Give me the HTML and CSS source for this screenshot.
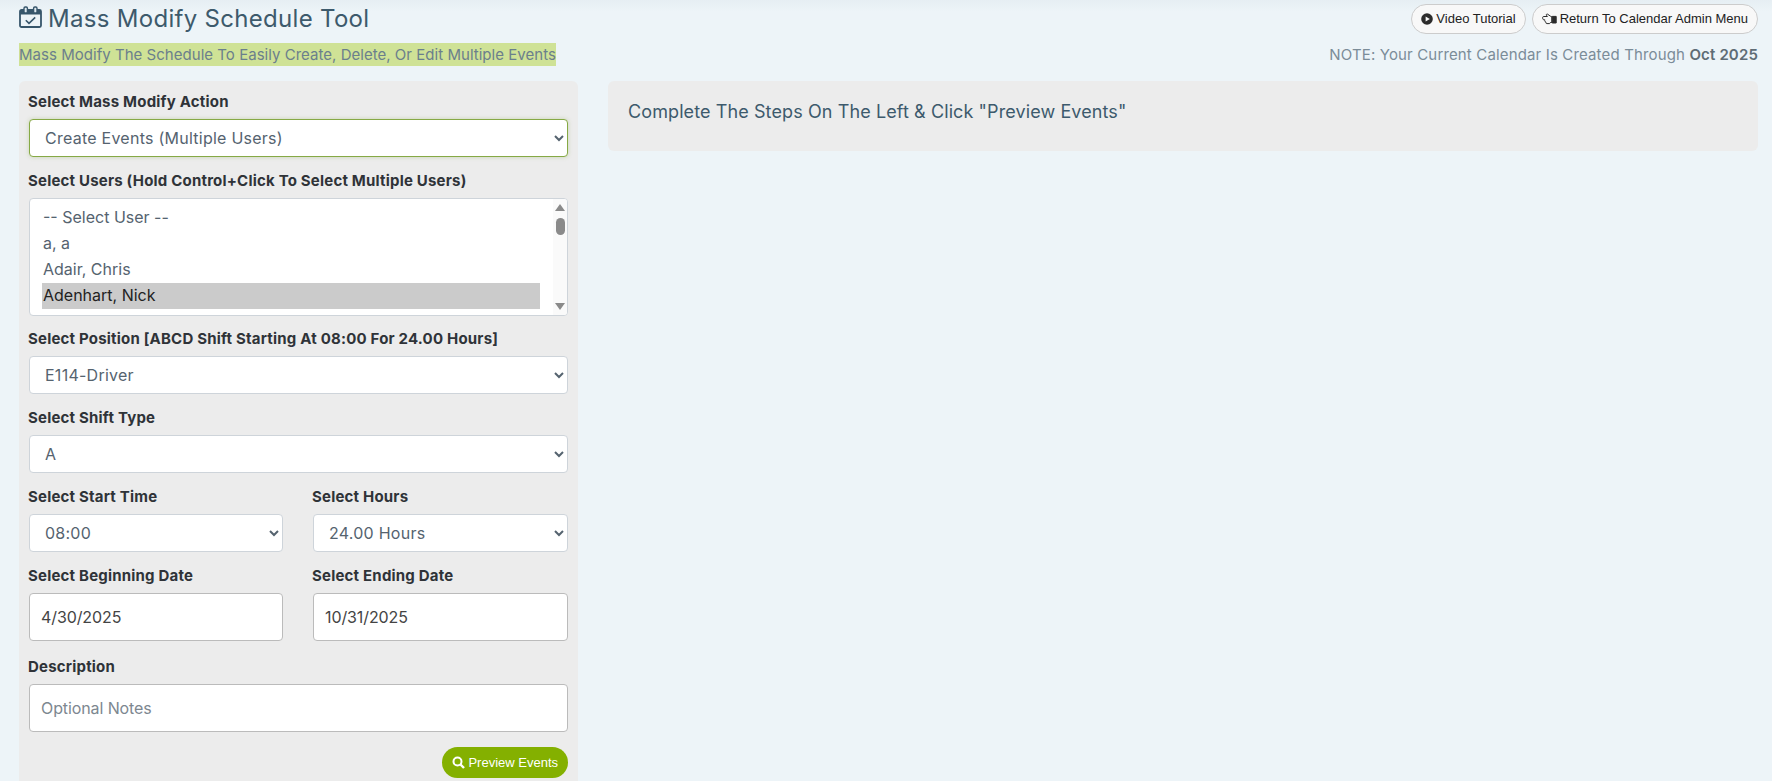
FILE: index.html
```html
<!DOCTYPE html>
<html>
<head>
  <title>Mass Modify Schedule Tool</title>
  <link rel="stylesheet" href="styles.css">
</head>
<body>
  <div class="page">
    <div class="page-head">
      <div class="head-left">
        <h1 class="page-title">
          <svg class="title-icon" viewBox="0 0 23 22" width="23" height="22" fill="none">
            <rect x="1" y="4" width="21" height="17" rx="1.5" stroke="#37566b" stroke-width="1.8"/>
            <path d="M1 4h21v4.500H1z" fill="#37566b"/>
            <rect x="5" y="1" width="3.400" height="6" rx="1.200" fill="#dfe9ef" stroke="#37566b" stroke-width="1.400"/>
            <rect x="14.600" y="1" width="3.400" height="6" rx="1.200" fill="#dfe9ef" stroke="#37566b" stroke-width="1.400"/>
            <path d="M6.800 14.200l3.200 3.200 6.200-6" stroke="#37566b" stroke-width="1.600"/>
          </svg>
          Mass Modify Schedule Tool
        </h1>
        <div class="subtitle"><span class="marked">Mass Modify The Schedule To Easily Create, Delete, Or Edit Multiple Events</span></div>
      </div>
      <div class="head-right">
        <div class="head-buttons">
          <a class="pill">
            <svg viewBox="0 0 12 12" width="12" height="12"><circle cx="6" cy="6" r="5.800" fill="#2b2b2b"/><path d="M4.600 3.400L8.800 6 4.600 8.600z" fill="#f8f8f8"/></svg>
            Video Tutorial
          </a>
          <a class="pill">
            <svg viewBox="0 0 15 12" width="15" height="12" fill="none" stroke="#2b2b2b" stroke-width="1"><path d="M.6 4.600c0-.8.600-1.100 1.200-1.100h3.600L4.400 2.200c-.4-.8.500-1.500 1.200-1L8.200 3c.5.4 1 .7 1.600.7v5.800H8.400l-.8 1.100H4.800c-.7 0-1-.6-.8-1.200-.7-.1-1-.7-.7-1.300-.6-.2-.8-.8-.5-1.300H1.800C1 6.800.6 5.400.6 4.600z"/><path d="M10.200 3.400h4v6.600h-4z" fill="#2b2b2b"/></svg>
            Return To Calendar Admin Menu
          </a>
        </div>
        <div class="note">NOTE: Your Current Calendar Is Created Through <b>Oct 2025</b></div>
      </div>
    </div>

    <div class="columns">
      <div class="panel form-panel">
        <label class="field-label">Select Mass Modify Action</label>
        <select class="field field-active"><option>Create Events (Multiple Users)</option></select>

        <label class="field-label">Select Users (Hold Control+Click To Select Multiple Users)</label>
        <div class="user-list">
          <div class="user-rows">
            <div class="user-row">-- Select User --</div>
            <div class="user-row">a, a</div>
            <div class="user-row">Adair, Chris</div>
            <div class="user-row user-picked">Adenhart, Nick</div>
          </div>
          <div class="scroll-track">
            <svg viewBox="0 0 10 7" width="10" height="7"><path d="M5 0l5 7H0z" fill="#8a8a8a"/></svg>
            <div class="scroll-thumb"></div>
            <div class="scroll-gap"></div>
            <svg viewBox="0 0 10 7" width="10" height="7"><path d="M5 7L0 0h10z" fill="#8a8a8a"/></svg>
          </div>
        </div>

        <label class="field-label">Select Position [ABCD Shift Starting At 08:00 For 24.00 Hours]</label>
        <select class="field"><option>E114-Driver</option></select>

        <label class="field-label">Select Shift Type</label>
        <select class="field"><option>A</option></select>

        <div class="two-col">
          <div>
            <label class="field-label">Select Start Time</label>
            <select class="field"><option>08:00</option></select>
          </div>
          <div>
            <label class="field-label">Select Hours</label>
            <select class="field"><option>24.00 Hours</option></select>
          </div>
        </div>

        <div class="two-col">
          <div>
            <label class="field-label">Select Beginning Date</label>
            <input class="text-input" type="text" value="4/30/2025">
          </div>
          <div>
            <label class="field-label">Select Ending Date</label>
            <input class="text-input" type="text" value="10/31/2025">
          </div>
        </div>

        <label class="field-label">Description</label>
        <input class="text-input" type="text" placeholder="Optional Notes">

        <div class="form-actions">
          <button class="preview-btn">
            <svg viewBox="0 0 13 13" width="13" height="13" fill="none" stroke="#fff"><circle cx="5.500" cy="5.500" r="4" stroke-width="2"/><path d="M8.500 8.500l3.500 3.500" stroke-width="2.400"/></svg>
            Preview Events
          </button>
        </div>
      </div>

      <div class="panel result-panel">Complete The Steps On The Left &amp; Click "Preview Events"</div>
    </div>
  </div>
</body>
</html>
```

FILE: styles.css
```css
html, body {
  height: 100%;
}

body {
  margin: 0;
  overflow: hidden;
  font-family: Inter, "Noto Sans", sans-serif;
  color: #3d5a6c;
  background: linear-gradient(#e6eef3, #edf4f8 12px);
}

.page {
  padding: 0 14px 0 19px;
}

.page-head {
  display: flex;
  justify-content: space-between;
}

.page-title {
  display: flex;
  align-items: center;
  gap: 6px;
  height: 36px;
  margin: 0;
  font-size: 24px;
  font-weight: 400;
  letter-spacing: .3px;
}

.title-icon {
  margin-bottom: 3px;
}

.subtitle {
  margin-top: 7px;
  font-size: 15px;
  line-height: 23px;
  letter-spacing: .03px;
  color: #6b7f8c;
}

.marked {
  display: inline-block;
  background: #cfe296;
}

.head-right {
  text-align: right;
}

.head-buttons {
  display: flex;
  justify-content: flex-end;
  gap: 6px;
  padding-top: 4px;
}

.pill {
  display: flex;
  align-items: center;
  gap: 3px;
  height: 30px;
  padding: 0 9px 1px;
  box-sizing: border-box;
  font-family: "Liberation Sans", Arial, sans-serif;
  font-size: 13px;
  color: #222;
  background: #f8f8f8;
  border: 1px solid #ccc;
  border-radius: 15px;
}

.note {
  margin-top: 9px;
  font-size: 15px;
  line-height: 23px;
  letter-spacing: .15px;
  color: #7b8c98;
}

.note b {
  color: #5f6c75;
  font-weight: 600;
}

.columns {
  display: flex;
  align-items: flex-start;
  gap: 30px;
  margin-top: 15px;
}

.panel {
  background: #ececec;
  border-radius: 6px;
}

.form-panel {
  flex: 0 0 559px;
  box-sizing: border-box;
  height: 720px;
  padding: 12px 10px 0 10px;
}

.result-panel {
  flex: 1;
  height: 70px;
  padding: 0 20px;
  line-height: 62px;
  font-size: 18px;
  letter-spacing: .1px;
}

.field-label {
  display: block;
  margin-bottom: 8px;
  margin-left: -1px;
  font-size: 15px;
  line-height: 18px;
  font-weight: 700;
  letter-spacing: .2px;
  color: #2f3338;
}

.field {
  display: block;
  width: 100%;
  height: 38px;
  margin-bottom: 15px;
  padding: 0 11px;
  box-sizing: border-box;
  font-family: inherit;
  font-size: 16px;
  letter-spacing: .25px;
  color: #55636f;
  background: #fff;
  border: 1px solid #ced4da;
  border-radius: 4px;
}

.field-active {
  border-color: #86a945;
  box-shadow: 0 0 4px rgba(134, 169, 69, .35);
}

.user-list {
  display: flex;
  height: 118px;
  margin-bottom: 14px;
  box-sizing: border-box;
  background: #fff;
  border: 1px solid #ced4da;
  border-radius: 4px;
  overflow: hidden;
}

.user-rows {
  flex: 1;
  padding: 6px 13px 0 12px;
}

.user-row {
  height: 26px;
  padding-left: 1px;
  font-size: 16px;
  line-height: 25px;
  color: #55636f;
}

.user-picked {
  color: #222;
  background: #cbcbcb;
}

.scroll-track {
  flex: 0 0 14px;
  display: flex;
  flex-direction: column;
  align-items: center;
  padding: 5px 0 5px;
  box-sizing: border-box;
  background: #fafafa;
}

.scroll-thumb {
  width: 9px;
  height: 17px;
  margin-top: 7px;
  background: #8a8a8a;
  border-radius: 5px;
}

.scroll-gap {
  flex: 1;
}

.two-col {
  display: grid;
  grid-template-columns: 254px 255px;
  gap: 30px;
}

.text-input {
  display: block;
  width: 100%;
  height: 48px;
  margin-bottom: 17px;
  padding: 0 11px;
  box-sizing: border-box;
  font-family: inherit;
  font-size: 16px;
  letter-spacing: -.1px;
  color: #444;
  background: #fff;
  border: 1px solid #bbb;
  border-radius: 4px;
}

.text-input::placeholder {
  color: #7d8790;
}

.form-actions {
  display: flex;
  justify-content: flex-end;
  margin-top: -2px;
}

.preview-btn {
  display: flex;
  align-items: center;
  gap: 3px;
  height: 31px;
  padding: 0 10px;
  font-family: "Liberation Sans", Arial, sans-serif;
  font-size: 13px;
  color: #fff;
  background: #84b000;
  border: none;
  border-radius: 16px;
  cursor: pointer;
}
```
